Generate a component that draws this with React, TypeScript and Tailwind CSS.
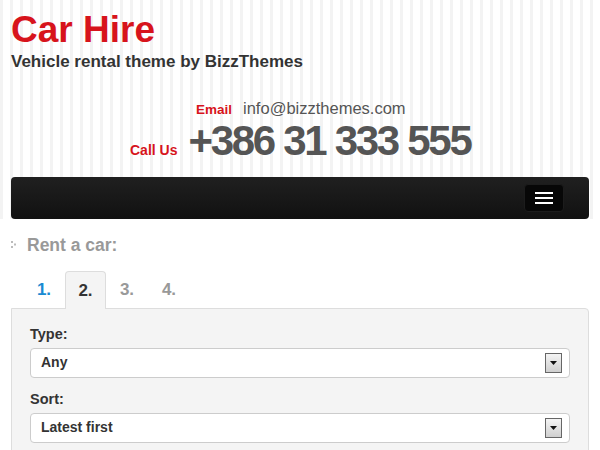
import React from 'react';

function SelectBox({ value }: { value: string }) {
  return (
    <div className="flex h-[30px] items-center justify-between rounded-[4px] border border-[#cccccc] bg-white pl-[10px] pr-[7px]">
      <span className="text-[14px] font-bold text-[#333]">{value}</span>
      <span className="flex h-[20px] w-[17px] items-center justify-center border border-[#666] bg-gradient-to-b from-[#f4f4f4] to-[#cfcfcf]">
        <svg width="7" height="4" viewBox="0 0 7 4"><path d="M0 0h7L3.5 4z" fill="#111" /></svg>
      </span>
    </div>
  );
}

export default function App() {
  return (
    <div className="h-[450px] w-[600px] overflow-hidden bg-white font-['Liberation_Sans',Arial,sans-serif]">
      <header className="bg-[repeating-linear-gradient(90deg,#f3f3f3_0px,#f3f3f3_3px,#ffffff_3px,#ffffff_10px)] px-[11px] pt-[10px]">
        <h1 className="text-[37px] font-bold leading-[40px] text-[#d7141c]">Car Hire</h1>
        <p className="mt-[2px] text-[17px] font-bold leading-[20px] text-[#333]">Vehicle rental theme by BizzThemes</p>
        <div className="mt-[24px] flex items-baseline pl-[185px]">
          <span className="text-[13.5px] font-bold text-[#d7141c]">Email</span>
          <span className="ml-[11px] text-[16.5px] text-[#555]">info@bizzthemes.com</span>
        </div>
        <div className="flex items-baseline pl-[119px] leading-[40px]">
          <span className="text-[14px] font-bold text-[#d7141c]">Call Us</span>
          <span className="ml-[11px] text-[42px] font-bold tracking-[-2.3px] text-[#555]">+386 31 333 555</span>
        </div>
        <nav className="mt-[7px] flex h-[42px] items-center justify-end rounded-[4px] bg-gradient-to-b from-[#202020] to-[#111] pr-[25px]">
          <button type="button" className="flex h-[28px] w-[40px] flex-col items-center justify-center gap-[3px] rounded-[4px] border border-[#1c1c1c] bg-[#070707]">
            <span className="h-[2px] w-[18px] bg-white" />
            <span className="h-[2px] w-[18px] bg-white" />
            <span className="h-[2px] w-[18px] bg-white" />
          </button>
        </nav>
      </header>
      <main className="px-[11px]">
        <div className="mt-[16px] flex h-[20px] items-center gap-[10px]">
          <svg width="6" height="7" viewBox="0 0 6 7">
            <rect x="0" y="0" width="2" height="2" fill="#bbb" />
            <rect x="3" y="2.5" width="2" height="2" fill="#bbb" />
            <rect x="0" y="5" width="2" height="2" fill="#bbb" />
          </svg>
          <span className="text-[17.5px] font-bold leading-[20px] text-[#999]">Rent a car:</span>
        </div>
        <div className="mt-[16px] flex pl-[12px] text-[17px] font-bold">
          <span className="flex h-[37px] w-[42px] items-center justify-center text-[#1a8ad2]">1.</span>
          <span className="relative z-10 -mb-px flex h-[38px] w-[41px] items-center justify-center rounded-t-[4px] border border-b-0 border-[#ddd] bg-[#f4f4f4] text-[#333]">2.</span>
          <span className="flex h-[37px] w-[42px] items-center justify-center text-[#999]">3.</span>
          <span className="flex h-[37px] w-[42px] items-center justify-center text-[#999]">4.</span>
        </div>
        <section className="rounded-tr-[4px] border border-[#ddd] bg-[#f4f4f4] px-[18px] pb-[20px] pt-[16px]">
          <label className="block text-[14.5px] font-bold leading-[18px] text-[#333]">Type:</label>
          <div className="mt-[5px]"><SelectBox value="Any" /></div>
          <label className="mt-[12px] block text-[14.5px] font-bold leading-[18px] text-[#333]">Sort:</label>
          <div className="mt-[5px]"><SelectBox value="Latest first" /></div>
        </section>
      </main>
    </div>
  );
}
